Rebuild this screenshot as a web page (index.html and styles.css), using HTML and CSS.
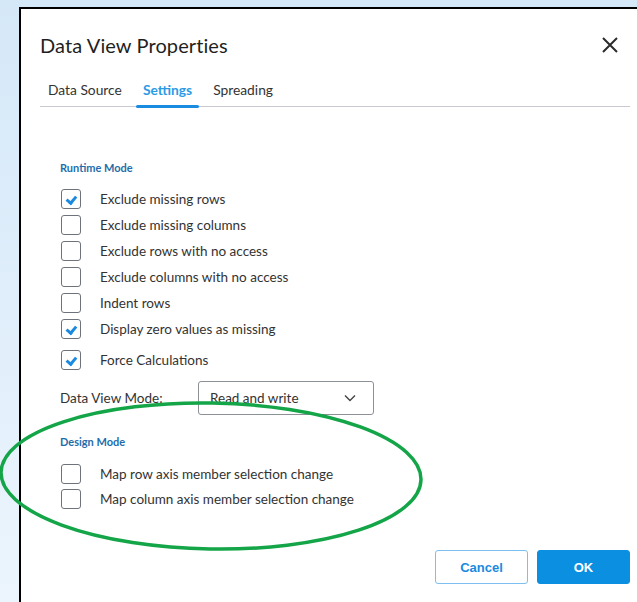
FILE: index.html
```html
<!DOCTYPE html>
<html lang="en">
<head>
<meta charset="utf-8">
<title>Data View Properties</title>
<link rel="stylesheet" href="styles.css">
</head>
<body>
<div class="dialog">
  <div class="dialog-header">
    <h1 class="dialog-title">Data View Properties</h1>
    <button class="close-btn" aria-label="Close">
      <svg width="18" height="18" viewBox="0 0 18 18"><path d="M2 2 L16 16 M16 2 L2 16" stroke="#2b2b2b" stroke-width="2" fill="none"/></svg>
    </button>
  </div>

  <div class="tabs">
    <div class="tab">Data Source</div>
    <div class="tab active">Settings</div>
    <div class="tab">Spreading</div>
  </div>

  <div class="panel">
    <div class="section-title">Runtime Mode</div>
    <div class="check-list">
      <label class="check-row"><span class="box checked"></span><span class="label">Exclude missing rows</span></label>
      <label class="check-row"><span class="box"></span><span class="label">Exclude missing columns</span></label>
      <label class="check-row"><span class="box"></span><span class="label">Exclude rows with no access</span></label>
      <label class="check-row"><span class="box"></span><span class="label">Exclude columns with no access</span></label>
      <label class="check-row"><span class="box"></span><span class="label">Indent rows</span></label>
      <label class="check-row"><span class="box checked"></span><span class="label">Display zero values as missing</span></label>
      <label class="check-row spaced"><span class="box checked"></span><span class="label">Force Calculations</span></label>
    </div>

    <div class="field-row">
      <span class="field-label">Data View Mode:</span>
      <div class="select">
        <span>Read and write</span>
        <svg width="12" height="8" viewBox="0 0 12 8"><path d="M1 1.5 L6 6.5 L11 1.5" stroke="#444" stroke-width="1.4" fill="none"/></svg>
      </div>
    </div>

    <div class="section-title design">Design Mode</div>
    <div class="check-list tight">
      <label class="check-row"><span class="box"></span><span class="label">Map row axis member selection change</span></label>
      <label class="check-row"><span class="box"></span><span class="label">Map column axis member selection change</span></label>
    </div>
  </div>

  <div class="actions">
    <button class="btn btn-secondary">Cancel</button>
    <button class="btn btn-primary">OK</button>
  </div>
</div>

<svg class="mark" width="637" height="602" viewBox="0 0 637 602">
  <ellipse cx="211" cy="476" rx="210" ry="73" transform="rotate(1 211 476)" fill="none" stroke="#14a548" stroke-width="3.5"/>
</svg>
</body>
</html>
```

FILE: styles.css
```css
html, body {
  margin: 0;
  padding: 0;
}

body {
  width: 637px;
  height: 602px;
  overflow: hidden;
  position: relative;
  background: linear-gradient(180deg, #d5e8f8 0%, #e2effb 60%, #ecf5fd 100%);
  font-family: Lato, "Open Sans", sans-serif;
  color: #333;
}

.dialog {
  box-sizing: border-box;
  margin: 7px 0 0 19px;
  width: 618px;
  height: 595px;
  background: #fff;
  border-top: 2px solid #000;
  border-left: 2px solid #000;
  padding: 0 7px 0 19px;
  display: flex;
  flex-direction: column;
}

.dialog-header {
  display: flex;
  align-items: center;
  justify-content: space-between;
  padding-top: 24px;
}

.dialog-title {
  margin: 0;
  font-size: 20px;
  line-height: 24px;
  font-weight: 400;
  color: #1f1f1f;
  letter-spacing: 0.1px;
}

.close-btn {
  border: 0;
  background: none;
  padding: 0;
  margin-right: 11px;
  width: 18px;
  height: 18px;
  display: flex;
}

.tabs {
  display: flex;
  gap: 7px;
  padding-left: 1px;
  margin-top: 19px;
  border-bottom: 1px solid #c9c9d1;
}

.tab {
  position: relative;
  padding: 6px 7px 8px;
  font-size: 13.8px;
  line-height: 16px;
  color: #333;
}

.tab.active {
  color: #2c9be6;
  font-weight: 700;
}

.tab.active::after {
  content: "";
  position: absolute;
  left: 0;
  right: 0;
  bottom: -2px;
  height: 3px;
  border-radius: 2px;
  background: #1a8ce0;
}

.panel {
  padding-left: 20px;
}

.section-title {
  margin-top: 54px;
  font-size: 11px;
  line-height: 14px;
  font-weight: 700;
  color: #1f6dab;
}

.section-title.design {
  margin-top: 20px;
}

.check-list {
  margin-top: 14px;
  display: flex;
  flex-direction: column;
  gap: 6px;
}

.check-list.tight {
  margin-top: 15px;
  gap: 5px;
}

.check-row {
  display: flex;
  align-items: center;
  height: 20px;
  font-size: 13.5px;
  color: #333;
}

.check-row.spaced {
  margin-top: 5px;
}

.box {
  box-sizing: border-box;
  width: 20px;
  height: 20px;
  margin-left: 1px;
  margin-right: 19px;
  border: 1.5px solid #6e737b;
  border-radius: 3px;
  background: #fff;
  position: relative;
  flex: none;
}

.box.checked::after {
  content: "";
  position: absolute;
  left: 6px;
  top: 4px;
  width: 3.5px;
  height: 7px;
  border: solid #1a8ae0;
  border-width: 0 3px 3px 0;
  transform: rotate(40deg);
}

.field-row {
  display: flex;
  align-items: center;
  margin-top: 11px;
}

.field-label {
  width: 138px;
  font-size: 13.5px;
  color: #333;
}

.select {
  box-sizing: border-box;
  width: 176px;
  height: 34px;
  border: 1px solid #8c9097;
  border-radius: 3px;
  display: flex;
  align-items: center;
  justify-content: space-between;
  padding: 0 17px 0 11px;
  font-size: 13.5px;
  color: #333;
}

.actions {
  display: flex;
  justify-content: flex-end;
  gap: 9px;
  margin-top: 41px;
}

.btn {
  box-sizing: border-box;
  width: 93px;
  height: 34px;
  border-radius: 3px;
  font-family: "Liberation Sans", Arial, sans-serif;
  font-size: 13px;
  font-weight: 700;
}

.btn-secondary {
  background: #fff;
  border: 1px solid #7dbff0;
  color: #1a8ae0;
}

.btn-primary {
  background: #0b8fe1;
  border: 1px solid #0b8fe1;
  color: #fff;
}

.mark {
  position: absolute;
  left: 0;
  top: 0;
  pointer-events: none;
}
```
